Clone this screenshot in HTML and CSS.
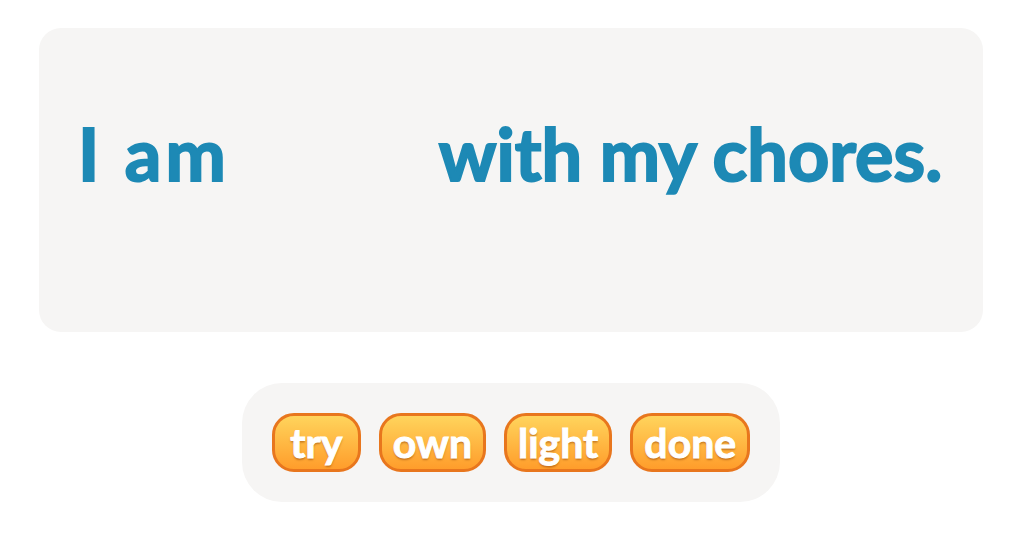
FILE: index.html
```html
<!DOCTYPE html>
<html>
<head>
<meta charset="utf-8">
<link rel="stylesheet" href="styles.css">
</head>
<body>
<div class="page">
  <div class="card">
    <p class="sentence"><span class="word">I am</span><span class="blank"></span><span class="word">with my chores.</span></p>
  </div>
  <div class="tray">
    <span class="chip">try</span>
    <span class="chip">own</span>
    <span class="chip">light</span>
    <span class="chip">done</span>
  </div>
</div>
</body>
</html>
```
FILE: styles.css
```css
html, body {
  margin: 0;
  padding: 0;
  background: #ffffff;
}
.page {
  width: 1022px;
  height: 533px;
  display: flex;
  flex-direction: column;
  align-items: center;
  font-family: "Lato", "DejaVu Sans", sans-serif;
}
.card {
  box-sizing: border-box;
  margin-top: 28px;
  width: 944px;
  height: 304px;
  background: #f6f5f4;
  border-radius: 22px;
  padding: 89px 0 0 39px;
}
.sentence {
  margin: 0;
  font-size: 72px;
  font-weight: 700;
  line-height: 72px;
  color: #1d89b5;
  white-space: nowrap;
  -webkit-text-stroke: 2px #1d89b5;
}
.word:first-child {
  letter-spacing: 4px;
}
.blank {
  display: inline-block;
  width: 209px;
}
.tray {
  box-sizing: border-box;
  margin-top: 51px;
  height: 119px;
  padding: 30px;
  background: #f6f5f4;
  border-radius: 40px;
  display: flex;
  gap: 18px;
}
.chip {
  box-sizing: border-box;
  height: 59px;
  min-width: 89px;
  padding: 0 11px;
  border: 3px solid #e8761d;
  border-radius: 22px;
  background: linear-gradient(#ffd45c, #ff9d2b);
  color: #ffffff;
  font-size: 41px;
  font-weight: 700;
  line-height: 51px;
  -webkit-text-stroke: 1px #ffffff;
  text-shadow: 0 2px 2px rgba(150, 70, 10, 0.55);
  display: flex;
  align-items: center;
  justify-content: center;
}
```
